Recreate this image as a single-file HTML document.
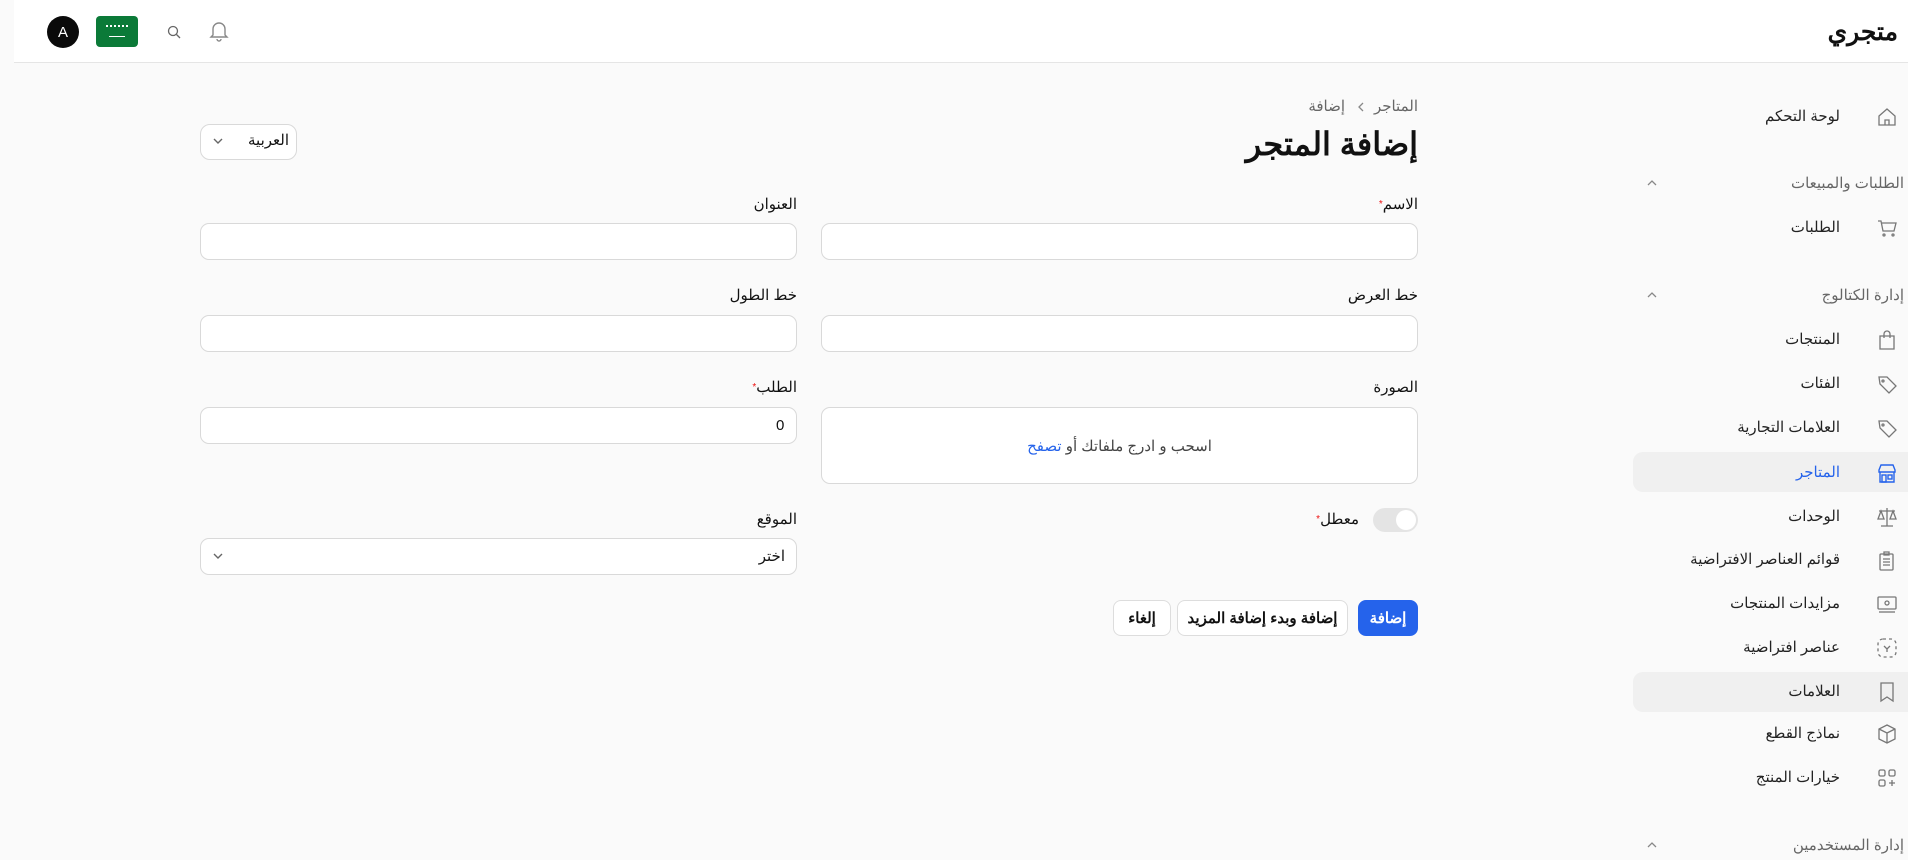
<!DOCTYPE html>
<html lang="ar" dir="rtl"><head><meta charset="utf-8"><style>
*{box-sizing:border-box;margin:0;padding:0}
body{width:1908px;height:860px;overflow:hidden;background:#fafafa;font-family:"Liberation Sans","Noto Sans CJK SC",sans-serif;color:#111;position:relative}
.a{position:absolute}
.hdr{left:14px;right:0;top:0;height:63px;background:#fff;border-bottom:1px solid #e5e5e5}
.t{position:absolute;white-space:nowrap;font-size:15px;line-height:20px}
.side{color:#222}
.sec{color:#666;font-size:15px}
.ic{position:absolute;width:22px;height:22px}
.inp{position:absolute;background:#fff;border:1px solid #d9d9d9;border-radius:9px}
.lbl{position:absolute;white-space:nowrap;font-size:15px;line-height:20px;color:#111}
.req{color:#e11;font-size:10px;vertical-align:top}
.btn{position:absolute;height:36px;border-radius:8px;font-size:15px;font-weight:bold;display:flex;align-items:center;justify-content:center;white-space:nowrap}
</style></head><body>
<div class="a hdr"></div>
<div class="t" style="right:10px;top:18px;font-size:25px;line-height:28px;font-weight:bold">متجري</div>
<div class="a" style="left:47px;top:16px;width:32px;height:32px;border-radius:50%;background:#0a0a0a;color:#fff;font-size:15px;display:flex;align-items:center;justify-content:center">A</div>
<div class="a" style="left:96px;top:16px;width:42px;height:31px;border-radius:4px;background:#0b7a38"><div class="a" style="left:10px;top:9px;width:22px;height:4px;border-top:2px dotted #fff"></div><div class="a" style="left:13px;top:20px;width:16px;height:1px;background:#fff"></div></div>
<svg class="a" style="left:166px;top:24px" width="16" height="16" viewBox="0 0 16 16" fill="none" stroke="#666" stroke-width="1.3"><circle cx="7" cy="7" r="4.5"/><path d="M10.5 10.5L14 14"/></svg>
<svg class="a" style="left:208px;top:19px" width="22" height="24" viewBox="0 0 22 24" fill="none" stroke="#888" stroke-width="1.4"><path d="M5 16V10a6 6 0 0 1 12 0v6l2 2H3z"/><path d="M9 20a2 2 0 0 0 4 0"/></svg>

<!-- sidebar -->
<div class="a" style="left:1633px;top:452px;width:275px;height:40px;border-radius:10px 0 0 10px;background:#f0f0f0"></div>
<div class="a" style="left:1633px;top:672px;width:275px;height:40px;border-radius:10px 0 0 10px;background:#f0f0f0"></div>
<svg class="ic" style="left:1876px;top:106px" viewBox="0 0 22 22" fill="none" stroke="#777" stroke-width="1.3"><path d="M3 10L11 3l8 7v9H3z"/><path d="M9 19v-5h4v5"/></svg>
<div class="t side" style="right:68px;top:107px">لوحة التحكم</div>
<div class="t sec" style="right:4px;top:174px">الطلبات والمبيعات</div>
<svg class="a" style="left:1645px;top:178px" width="14" height="10" viewBox="0 0 14 10" fill="none" stroke="#888" stroke-width="1.3"><path d="M3 7l4-4 4 4"/></svg>
<svg class="ic" style="left:1876px;top:217px" viewBox="0 0 22 22" fill="none" stroke="#777" stroke-width="1.3"><path d="M2 4h3l2 10h11l2-8H6"/><circle cx="8" cy="18" r="1"/><circle cx="17" cy="18" r="1"/></svg>
<div class="t side" style="right:68px;top:218px">الطلبات</div>
<div class="t sec" style="right:4px;top:286px">إدارة الكتالوج</div>
<svg class="a" style="left:1645px;top:290px" width="14" height="10" viewBox="0 0 14 10" fill="none" stroke="#888" stroke-width="1.3"><path d="M3 7l4-4 4 4"/></svg>
<svg class="ic" style="left:1876px;top:329px" viewBox="0 0 22 22" fill="none" stroke="#777" stroke-width="1.3"><path d="M4 7h14v13H4z"/><path d="M8 9V5a3 3 0 0 1 6 0v4"/></svg>
<div class="t side" style="right:68px;top:330px">المنتجات</div>
<svg class="ic" style="left:1876px;top:373px" viewBox="0 0 22 22" fill="none" stroke="#777" stroke-width="1.3"><path d="M3 4h8l9 9-7 7-9-9z"/><circle cx="7" cy="8" r="1"/></svg>
<div class="t side" style="right:68px;top:374px">الفئات</div>
<svg class="ic" style="left:1876px;top:417px" viewBox="0 0 22 22" fill="none" stroke="#777" stroke-width="1.3"><path d="M3 4h8l9 9-7 7-9-9z"/><circle cx="7" cy="8" r="1"/></svg>
<div class="t side" style="right:68px;top:418px">العلامات التجارية</div>
<svg class="ic" style="left:1876px;top:462px" viewBox="0 0 22 22" fill="none" stroke="#2563eb" stroke-width="1.4"><path d="M3 8l2-5h12l2 5v2H3z"/><path d="M4 10v10h14V10"/><rect x="6" y="13" width="4" height="7"/><rect x="12" y="13" width="4" height="4"/></svg>
<div class="t side" style="right:68px;top:463px;color:#2563eb">المتاجر</div>
<svg class="ic" style="left:1876px;top:506px" viewBox="0 0 22 22" fill="none" stroke="#777" stroke-width="1.3"><path d="M11 2v18M5 20h12M3 5h16M5 5l-3 8h6zM17 5l-3 8h6z"/></svg>
<div class="t side" style="right:68px;top:507px">الوحدات</div>
<svg class="ic" style="left:1876px;top:549px" viewBox="0 0 22 22" fill="none" stroke="#777" stroke-width="1.3"><rect x="4" y="5" width="13" height="16" rx="1"/><path d="M8 3h5v3H8zM7 10h7M7 13h7M7 16h7"/></svg>
<div class="t side" style="right:68px;top:550px">قوائم العناصر الافتراضية</div>
<svg class="ic" style="left:1876px;top:593px" viewBox="0 0 22 22" fill="none" stroke="#777" stroke-width="1.3"><rect x="2" y="4" width="18" height="12" rx="1"/><circle cx="11" cy="10" r="2"/><path d="M3 19h16"/></svg>
<div class="t side" style="right:68px;top:594px">مزايدات المنتجات</div>
<svg class="ic" style="left:1876px;top:637px" viewBox="0 0 22 22" fill="none" stroke="#777" stroke-width="1.3" stroke-dasharray="3 3"><rect x="2" y="2" width="18" height="18" rx="5"/><path d="M8 9l3 3 3-3M11 12v3" stroke-dasharray="none"/></svg>
<div class="t side" style="right:68px;top:638px">عناصر افتراضية</div>
<svg class="ic" style="left:1876px;top:681px" viewBox="0 0 22 22" fill="none" stroke="#777" stroke-width="1.3"><path d="M5 2h12v18l-6-4-6 4z"/></svg>
<div class="t side" style="right:68px;top:682px">العلامات</div>
<svg class="ic" style="left:1876px;top:723px" viewBox="0 0 22 22" fill="none" stroke="#777" stroke-width="1.3"><path d="M11 2l8 4v10l-8 4-8-4V6z"/><path d="M3 6l8 4 8-4M11 10v10"/></svg>
<div class="t side" style="right:68px;top:724px">نماذج القطع</div>
<svg class="ic" style="left:1876px;top:767px" viewBox="0 0 22 22" fill="none" stroke="#777" stroke-width="1.3"><rect x="3" y="3" width="6" height="6" rx="1.5"/><rect x="13" y="3" width="6" height="6" rx="1.5"/><rect x="3" y="13" width="6" height="6" rx="1.5"/><path d="M16 13v6M13 16h6"/></svg>
<div class="t side" style="right:68px;top:768px">خيارات المنتج</div>
<div class="t sec" style="right:4px;top:836px">إدارة المستخدمين</div>
<svg class="a" style="left:1645px;top:840px" width="14" height="10" viewBox="0 0 14 10" fill="none" stroke="#888" stroke-width="1.3"><path d="M3 7l4-4 4 4"/></svg>

<!-- main -->
<div class="t" style="right:490px;top:97px;color:#666;font-size:15px">المتاجر</div>
<svg class="a" style="left:1356px;top:101px" width="10" height="12" viewBox="0 0 10 12" fill="none" stroke="#888" stroke-width="1.3"><path d="M7 2L3 6l4 4"/></svg>
<div class="t" style="right:563px;top:97px;color:#666;font-size:15px">إضافة</div>
<div class="t" style="right:490px;top:124px;font-size:32px;line-height:40px;font-weight:bold">إضافة المتجر</div>
<div class="inp" style="left:200px;top:124px;width:97px;height:36px;border-radius:10px"></div>
<div class="t" style="left:248px;top:131px;font-size:15px">العربية</div>
<svg class="a" style="left:212px;top:136px" width="12" height="10" viewBox="0 0 12 10" fill="none" stroke="#666" stroke-width="1.4"><path d="M2 3l4 4 4-4"/></svg>

<div class="lbl" style="right:490px;top:195px">الاسم<span class="req">*</span></div>
<div class="inp" style="left:821px;top:223px;width:597px;height:37px"></div>
<div class="lbl" style="right:1111px;top:195px">العنوان</div>
<div class="inp" style="left:200px;top:223px;width:597px;height:37px"></div>

<div class="lbl" style="right:490px;top:286px">خط العرض</div>
<div class="inp" style="left:821px;top:315px;width:597px;height:37px"></div>
<div class="lbl" style="right:1111px;top:286px">خط الطول</div>
<div class="inp" style="left:200px;top:315px;width:597px;height:37px"></div>

<div class="lbl" style="right:490px;top:378px">الصورة</div>
<div class="inp" style="left:821px;top:407px;width:597px;height:77px;display:flex;align-items:center;justify-content:center;font-size:15px;color:#444">اسحب و ادرج ملفاتك أو&nbsp;<span style="color:#2563eb">تصفح</span></div>
<div class="lbl" style="right:1111px;top:378px">الطلب<span class="req">*</span></div>
<div class="inp" style="left:200px;top:407px;width:597px;height:37px"></div>
<div class="t" style="left:776px;top:416px;font-size:15px">0</div>

<div class="a" style="left:1373px;top:508px;width:45px;height:24px;border-radius:12px;background:#e4e4e4"><div class="a" style="left:23px;top:2px;width:20px;height:20px;border-radius:50%;background:#fff"></div></div>
<div class="lbl" style="right:549px;top:510px">معطل<span class="req">*</span></div>
<div class="lbl" style="right:1111px;top:510px">الموقع</div>
<div class="inp" style="left:200px;top:538px;width:597px;height:37px"></div>
<div class="t" style="right:1123px;top:547px;font-size:15px">اختر</div>
<svg class="a" style="left:212px;top:551px" width="12" height="10" viewBox="0 0 12 10" fill="none" stroke="#666" stroke-width="1.4"><path d="M2 3l4 4 4-4"/></svg>

<div class="btn" style="left:1358px;top:600px;width:60px;background:#2563eb;color:#fff">إضافة</div>
<div class="btn" style="left:1177px;top:600px;width:171px;background:#fff;border:1px solid #ddd">إضافة وبدء إضافة المزيد</div>
<div class="btn" style="left:1113px;top:600px;width:58px;background:#fff;border:1px solid #ddd">إلغاء</div>
</body></html>
